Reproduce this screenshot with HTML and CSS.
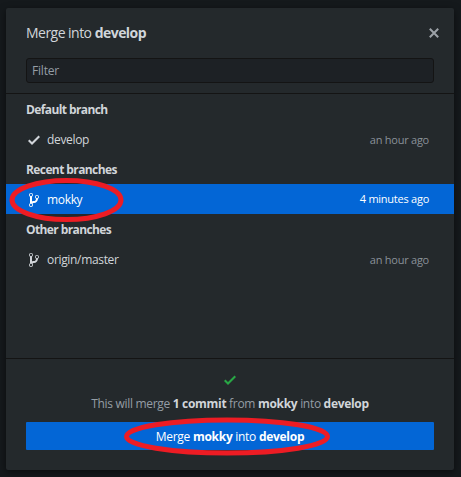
FILE: index.html
```html
<!DOCTYPE html>
<html lang="en">
<head>
<meta charset="utf-8">
<title>Merge into develop</title>
<link rel="stylesheet" href="styles.css">
</head>
<body>
<svg class="symbols" aria-hidden="true">
  <symbol id="check" viewBox="0 0 12 16"><path d="M12 5l-8 8-4-4 1.500-1.500L4 10l6.500-6.500L12 5z"/></symbol>
  <symbol id="branch" viewBox="0 0 10 16"><path fill-rule="evenodd" d="M10 5c0-1.110-.89-2-2-2a1.993 1.993 0 0 0-1 3.720v.3c-.02.520-.23.980-.63 1.380-.4.400-.86.610-1.380.630-.83.020-1.480.160-2 .450V4.720a1.993 1.993 0 0 0-1-3.720C.88 1 0 1.890 0 3a2 2 0 0 0 1 1.720v6.560c-.59.350-1 .990-1 1.720 0 1.110.89 2 2 2 1.110 0 2-.89 2-2 0-.530-.2-1-.53-1.360.09-.060.480-.410.590-.470.250-.110.560-.170.940-.170 1.050-.050 1.950-.450 2.750-1.250S8.950 7.770 9 6.730h-.02C9.590 6.370 10 5.730 10 5zM2 1.800c.66 0 1.200.550 1.200 1.200 0 .650-.55 1.200-1.200 1.200C1.350 4.200.8 3.650.8 3c0-.650.550-1.200 1.200-1.200zm0 12.410c-.66 0-1.200-.550-1.200-1.200 0-.650.550-1.200 1.200-1.200.650 0 1.200.550 1.200 1.200 0 .650-.55 1.200-1.200 1.200zm6-8c-.66 0-1.200-.550-1.200-1.200 0-.650.550-1.200 1.200-1.200.650 0 1.200.550 1.200 1.200 0 .650-.55 1.200-1.200 1.200z"/></symbol>
</svg>
<main class="dialog">
  <header class="header">
    <div class="title-row">
      <h1 class="title">Merge into <b>develop</b></h1>
      <svg class="close" viewBox="0 0 10 10"><path d="M.8.8l8.400 8.400M9.200.8L.8 9.200"/></svg>
    </div>
    <div class="filter">Filter</div>
  </header>
  <section class="list">
    <h2 class="group">Default branch</h2>
    <div class="row"><svg class="icon"><use href="#check"/></svg><span class="name">develop</span><span class="time">an hour ago</span></div>
    <h2 class="group">Recent branches</h2>
    <div class="row selected"><svg class="icon"><use href="#branch"/></svg><span class="name">mokky</span><span class="time">4 minutes ago</span>
      <svg class="ring ring-row" viewBox="0 0 115 44"><ellipse cx="57.500" cy="22" rx="54.500" ry="19.500"/></svg></div>
    <h2 class="group">Other branches</h2>
    <div class="row"><svg class="icon"><use href="#branch"/></svg><span class="name">origin/master</span><span class="time">an hour ago</span></div>
  </section>
  <footer class="footer">
    <svg class="ok"><use href="#check"/></svg>
    <p class="summary">This will merge <b>1 commit</b> from <b>mokky</b> into <b>develop</b></p>
    <div class="button"><span>Merge <b>mokky</b> into <b>develop</b></span>
      <svg class="ring ring-button" viewBox="0 0 206 39"><ellipse cx="103" cy="19.500" rx="100.500" ry="16.500"/></svg></div>
  </footer>
</main>
</body>
</html>
```

FILE: styles.css
```css
* { box-sizing: border-box; }
body {
  margin: 0;
  padding: 8px 7px 7px 6px;
  height: 477px;
  overflow: hidden;
  background: #15191c;
  font: 12px/18px "Open Sans", "Noto Sans", sans-serif;
  color: #d1d5da;
}
b { font-weight: 700; }
.symbols { position: absolute; width: 0; height: 0; }
.dialog {
  display: flex;
  flex-direction: column;
  width: 448px;
  height: 462px;
  background: #24292c;
  border-radius: 2px;
  box-shadow: 0 2px 7px rgba(0, 0, 0, .5);
}
.header {
  height: 86px;
  padding: 15px 20px 0;
  border-bottom: 1px solid #141414;
}
.title-row { display: flex; justify-content: space-between; height: 35px; }
.title { margin: 0; font-size: 14px; line-height: 20px; font-weight: 400; letter-spacing: -.53px; white-space: nowrap; }
.close { width: 10px; height: 10px; margin: 5px -5px 0 0; stroke: #9da2a8; stroke-width: 2; }
.filter {
  height: 25px;
  padding: 0 5px;
  border: 1px solid #141414;
  border-radius: 3px;
  background: #1d2125;
  color: #959da5;
  line-height: 24px;
  letter-spacing: -.2px;
}
.list { flex: 1; padding-top: 1px; }
.group { height: 30px; margin: 0; padding-left: 20px; font-size: 12px; line-height: 30px; font-weight: 700; letter-spacing: -.6px; }
.row { position: relative; display: flex; align-items: center; height: 30px; padding: 0 25px 0 20px; }
.icon { width: 16px; height: 16px; margin-right: 5px; fill: #d1d5da; }
.row:not(.selected) .icon { margin-top: -1px; }
.name { letter-spacing: -.33px; }
.time { margin-left: auto; margin-top: -1px; font-size: 11px; letter-spacing: -.25px; color: #8a9199; }
.selected { height: 30px; margin-top: -1px; margin-bottom: 1px; padding-top: 1px; background: #0366d6; color: #fff; }
.selected .icon { fill: #fff; }
.selected .time { color: #fff; }
.ring { position: absolute; fill: none; stroke: #ed1c24; stroke-width: 5; z-index: 1; }
.ring-row { left: 3px; top: -6px; width: 115px; height: 44px; }
.footer { height: 112px; padding: 13px 20px 0; border-top: 1px solid #141414; text-align: center; }
.ok { display: block; width: 16px; height: 16px; margin: 0 auto; fill: #28a745; }
.summary { margin: 7px 0 9px; color: #959da5; white-space: nowrap; letter-spacing: -.31px; }
.summary b { color: #d1d5da; }
.button { position: relative; height: 28px; border-radius: 1px; background: #0366d6; color: #fff; line-height: 30px; letter-spacing: -.28px; }
.ring-button { left: 98px; top: -5px; width: 206px; height: 39px; }
```
